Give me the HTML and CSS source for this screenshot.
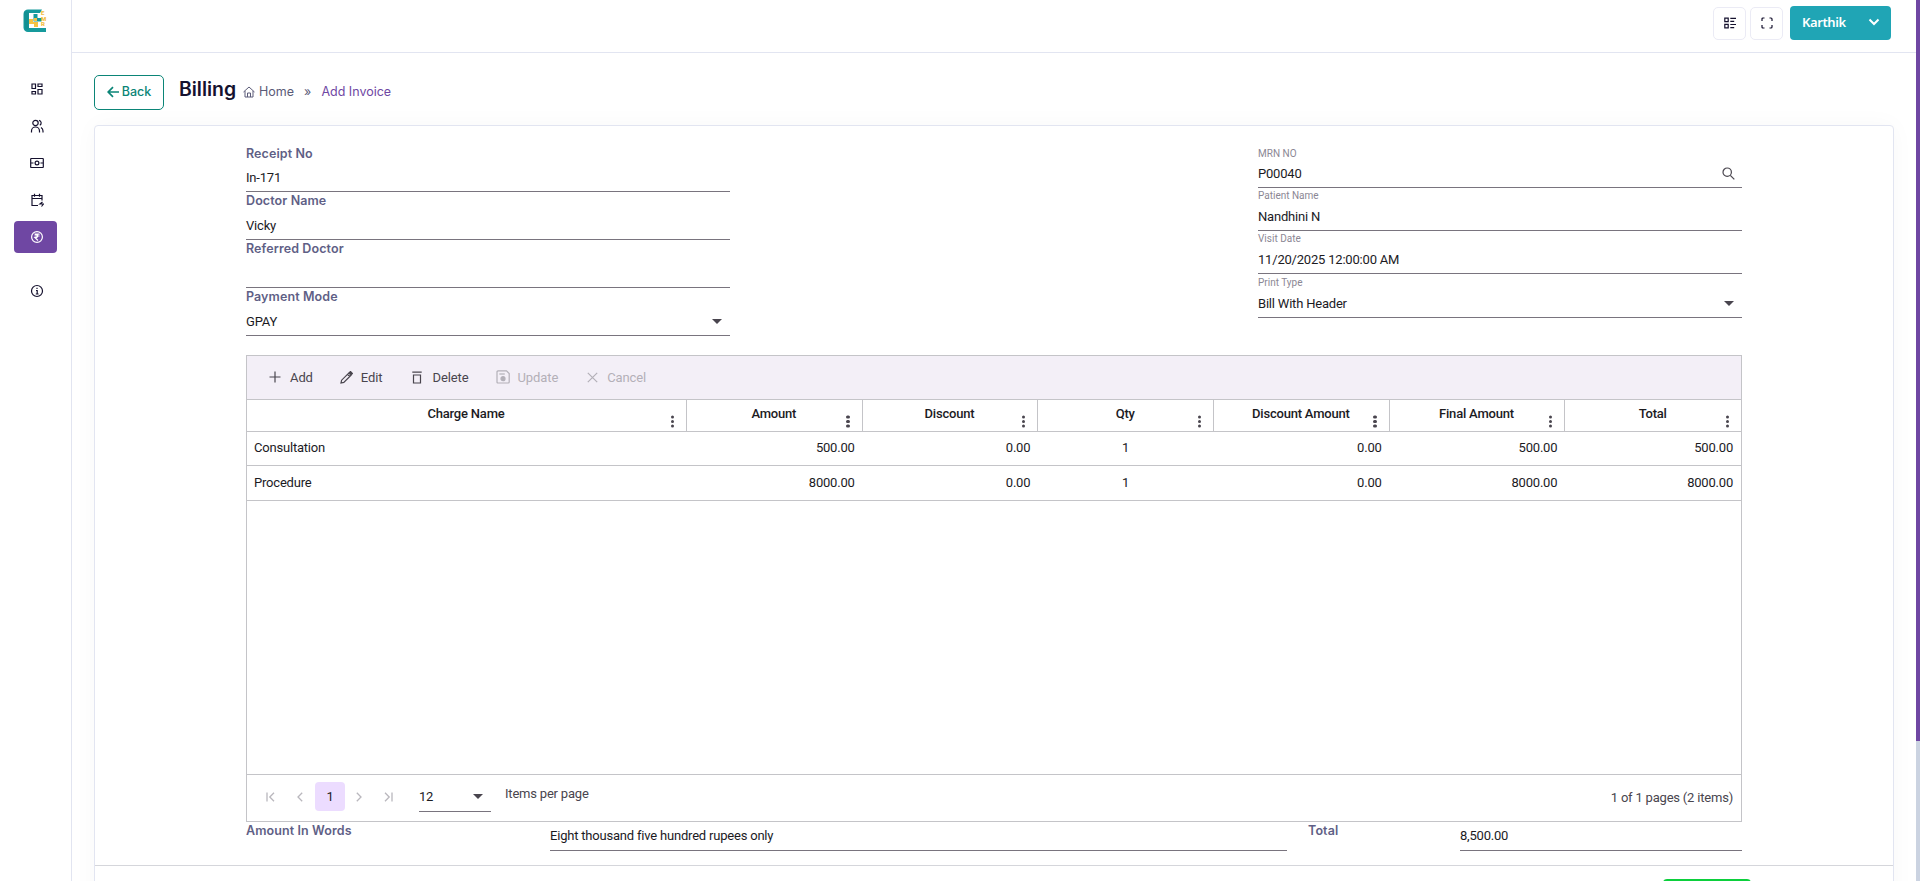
FILE: index.html
```html
<!DOCTYPE html>
<html lang="en">
<head>
  <meta charset="UTF-8">
  <meta name="viewport" content="width=device-width, initial-scale=1.0">
  <title>Billing - Add Invoice</title>
  <link rel="stylesheet" href="styles.css">
</head>
<body>
  <div class="app">
    <aside class="sidebar">
      <div class="logo">
        <svg width="24" height="24" viewBox="0 0 24 24">
          <path d="M5 .5h14l-2 3.5H6v15h17v4H5a4.5 4.5 0 0 1-4.500-4.500V5A4.500 4.500 0 0 1 5 .5z" fill="#169a9c"/>
          <path d="M1 2.500h4.500v18H2z" fill="#0e8588" opacity=".5"/>
          <path d="M10.500 5h4v4h4v3.500h-8z" fill="#169a9c"/>
          <path d="M6 10h4v3h5v5h-4v-3H6zM11 9h3v3h-3z" fill="#f6c244"/>
        </svg>
        <span class="logo-text">E<br>M<br>R</span>
      </div>
      <nav class="menu">
        <a class="menu-item" href="#">
          <svg width="12" height="12" viewBox="0 0 12 12" class="line"><path d="M1 1h3.500v4.500H1zM7 1h4v2.500H7zM1 8.500h3.500V11H1zM7 6.500h4V11H7z"/></svg>
        </a>
        <a class="menu-item" href="#">
          <svg width="14" height="14" viewBox="0 0 14 14" class="line"><circle cx="5.500" cy="4" r="2.700"/><path d="M1.500 13.500v-1.500a4 4 0 0 1 8 0v1.500M9 1.300a2.700 2.700 0 0 1 .8 5M11 8.500a4 4 0 0 1 2 3.500v1.500"/></svg>
        </a>
        <a class="menu-item" href="#">
          <svg width="14" height="12" viewBox="0 0 14 12" class="line"><rect x=".7" y="1.500" width="12.600" height="9" rx=".5"/><circle cx="7" cy="6" r="1.900"/><path d="M1 6h2.500M10.500 6H13"/></svg>
        </a>
        <a class="menu-item" href="#">
          <svg width="14" height="14" viewBox="0 0 14 14" class="line"><path d="M8 12.500H2v-10h10v5M2 5.500h10M4.500.8v3M9.500.8v3M12.500 9L10 11h3.500l-2 2.500"/></svg>
        </a>
        <a class="menu-item active" href="#">
          <svg width="14" height="14" viewBox="0 0 14 14" class="line"><circle cx="7" cy="7" r="5.400"/><path d="M4.500 4.200h5M4.500 6h5M5 4.300c3.500 0 3.500 3.400 0 3.400L8 10.500"/></svg>
        </a>
        <a class="menu-item info" href="#">
          <svg width="14" height="14" viewBox="0 0 14 14" class="line"><circle cx="7" cy="7" r="5.500"/><path d="M6 6.500h1.200V10M5.800 10h2.800M7 3.700v1.300"/></svg>
        </a>
      </nav>
    </aside>

    <div class="content">
      <header class="topbar">
        <button class="icon-btn">
          <svg width="12" height="12" viewBox="0 0 12 12" class="line"><path d="M.8 1.200h3.400v3.400H.8zM.8 7.400h3.400v3.400H.8zM6.300 1.300H12M6.300 4.400h3.900M6.300 7.500H12M6.300 10.600h3.900"/></svg>
        </button>
        <button class="icon-btn">
          <svg width="12" height="12" viewBox="0 0 12 12" class="line"><path d="M1 4V2q0-1 1-1h1.500M8.500 1H10q1 0 1 1v2M11 8v2q0 1-1 1H8.500M3.500 11H2q-1 0-1-1V8"/></svg>
        </button>
        <button class="user-btn">
          <span>Karthik</span>
          <svg width="12" height="8" viewBox="0 0 12 8" fill="none" stroke="#fff" stroke-width="2"><path d="M1.500 1.500L6 6l4.500-4.500"/></svg>
        </button>
      </header>

      <main class="page">
        <div class="page-head">
          <button class="back-btn">
            <svg width="12" height="12" viewBox="0 0 12 12" fill="none" stroke="#0b8577" stroke-width="1.700"><path d="M12 6H1.500M6 1.200L1.200 6 6 10.800"/></svg>
            Back
          </button>
          <h1>Billing</h1>
          <div class="breadcrumb">
            <svg width="12" height="12" viewBox="0 0 12 12" fill="none" stroke="#5b5b78" stroke-width="1"><path d="M.5 6L6 1l5.500 5M2 5v6h8V5M4.500 11V7h3v4"/></svg>
            <span class="home">Home</span>
            <span class="sep">»</span>
            <span class="current">Add Invoice</span>
          </div>
        </div>

        <section class="card">
          <div class="card-body">
            <div class="form">
              <div class="form-left">
                <label class="label">Receipt No</label>
                <div class="input">In-171</div>
                <label class="label">Doctor Name</label>
                <div class="input">Vicky</div>
                <label class="label">Referred Doctor</label>
                <div class="input"></div>
                <label class="label">Payment Mode</label>
                <div class="input">GPAY<i class="caret"></i></div>
              </div>
              <div class="form-right">
                <label class="float-label">MRN NO</label>
                <div class="input">P00040
                  <svg class="search" width="13" height="13" viewBox="0 0 13 13" fill="none" stroke="#49454e" stroke-width="1.200"><circle cx="5.200" cy="5.200" r="4.200"/><path d="M8.300 8.300l4 4"/></svg>
                </div>
                <label class="float-label">Patient Name</label>
                <div class="input">Nandhini N</div>
                <label class="float-label">Visit Date</label>
                <div class="input">11/20/2025 12:00:00 AM</div>
                <label class="float-label last">Print Type</label>
                <div class="input">Bill With Header<i class="caret"></i></div>
              </div>
            </div>

            <div class="grid">
              <div class="toolbar">
                <button class="tool add"><svg width="12" height="12" viewBox="0 0 12 12"><path d="M6 .5v11M.5 6h11"/></svg>Add</button>
                <button class="tool edit"><svg width="13" height="13" viewBox="0 0 13 13"><path d="M1 12l.6-2.800L8.800 2l2.200 2.200-7.200 7.200zM7.500 3.300l2.200 2.200"/><path d="M9.500 1.500l1-1 2 2-1 1z" fill="#49454e"/></svg>Edit</button>
                <button class="tool delete"><svg width="10" height="13" viewBox="0 0 10 13"><path d="M.3 1.200h9.400M1.500 4h7v8h-7z"/></svg>Delete</button>
                <button class="tool update disabled"><svg width="14" height="14" viewBox="0 0 14 14"><path d="M2 .8h8.500l2.700 2.700V12q0 1-1 1H2q-1 0-1-1V2q0-1 1-1z"/><path d="M3.300 4h5.500"/><circle cx="7" cy="8.700" r="2" fill="#b3b0b8"/></svg>Update</button>
                <button class="tool cancel disabled"><svg width="11" height="11" viewBox="0 0 11 11"><path d="M.8.8l9.400 9.400M10.200.8L.8 10.200"/></svg>Cancel</button>
              </div>
              <div class="row head">
                <div>Charge Name<i class="dots"></i></div>
                <div>Amount<i class="dots"></i></div>
                <div>Discount<i class="dots"></i></div>
                <div>Qty<i class="dots"></i></div>
                <div>Discount Amount<i class="dots"></i></div>
                <div>Final Amount<i class="dots"></i></div>
                <div>Total<i class="dots"></i></div>
              </div>
              <div class="row">
                <div class="name">Consultation</div>
                <div>500.00</div>
                <div>0.00</div>
                <div class="qty">1</div>
                <div>0.00</div>
                <div>500.00</div>
                <div>500.00</div>
              </div>
              <div class="row second">
                <div class="name">Procedure</div>
                <div>8000.00</div>
                <div>0.00</div>
                <div class="qty">1</div>
                <div>0.00</div>
                <div>8000.00</div>
                <div>8000.00</div>
              </div>
              <div class="empty"></div>
              <div class="pager">
                <span class="page-btn"><svg width="9" height="10" viewBox="0 0 9 10"><path d="M1 .5v9M8 .8L3.800 5 8 9.200"/></svg></span>
                <span class="page-btn"><svg width="6" height="10" viewBox="0 0 6 10"><path d="M5.200.8L1 5l4.200 4.200"/></svg></span>
                <span class="page-btn selected">1</span>
                <span class="page-btn next"><svg width="6" height="10" viewBox="0 0 6 10"><path d="M.8.8L5 5 .8 9.200"/></svg></span>
                <span class="page-btn last"><svg width="9" height="10" viewBox="0 0 9 10"><path d="M8 .5v9M1 .8L5.200 5 1 9.200"/></svg></span>
                <div class="page-size">12<i class="caret"></i></div>
                <span class="per-page">Items per page</span>
                <span class="page-info">1 of 1 pages (2 items)</span>
              </div>
            </div>

            <div class="summary">
              <label class="label">Amount In Words</label>
              <div class="input">Eight thousand five hundred rupees only</div>
              <label class="label total">Total</label>
              <div class="input">8,500.00</div>
            </div>
          </div>
          <div class="card-footer">
            <button class="save-btn"></button>
          </div>
        </section>
      </main>
    </div>

    <div class="scroll-track"><div class="scroll-thumb"></div></div>
  </div>
</body>
</html>
```
FILE: styles.css
```css
* {
  box-sizing: border-box;
}
body {
  margin: 0;
  font-family: Roboto, 'Liberation Sans', sans-serif;
  font-size: 13px;
  letter-spacing: -0.2px;
  color: #1c1b1f;
  background: #fff;
  overflow: hidden;
}
button {
  font-family: inherit;
  font-size: inherit;
  padding: 0;
  background: none;
  border: none;
  display: flex;
  align-items: center;
}
svg {
  display: block;
  flex-shrink: 0;
}
.app {
  display: flex;
  height: 881px;
  overflow: hidden;
}

/* sidebar */
.sidebar {
  width: 72px;
  border-right: 1px solid #e2e5f1;
}
.logo {
  display: flex;
  position: relative;
  height: 70px;
  padding: 9px 0 0 23px;
}
.logo-text {
  position: absolute;
  left: 41px;
  top: 10px;
  font-size: 6px;
  line-height: 5.5px;
  font-weight: 900;
  color: #f2bd42;
}
.menu {
  display: flex;
  flex-direction: column;
  gap: 5px;
  padding: 3px 14px;
}
.menu-item {
  display: flex;
  align-items: center;
  justify-content: center;
  height: 32px;
  padding-left: 3px;
  border-radius: 4px;
  color: #15112e;
}
.menu-item.active {
  background: #6f47a3;
  color: #fff;
}
.menu-item.info {
  margin-top: 17px;
}
.line {
  fill: none;
  stroke: currentColor;
  stroke-width: 1.2;
}

/* top bar */
.content {
  width: 1844px;
  display: flex;
  flex-direction: column;
}
.topbar {
  display: flex;
  flex-shrink: 0;
  justify-content: flex-end;
  align-items: flex-start;
  height: 53px;
  padding: 6px 25px 0 0;
  border-bottom: 1px solid #e2e5f1;
}
.icon-btn {
  width: 33px;
  height: 33px;
  margin: 1px 4px 0 0;
  padding-bottom: 2px;
  justify-content: center;
  border: 1px solid #ebebf5;
  border-radius: 5px;
  color: #15112e;
}
.user-btn {
  width: 101px;
  height: 34px;
  margin-left: 3px;
  padding: 0 11px 2px 12px;
  justify-content: space-between;
  border-radius: 4px;
  background: #20a5b5;
  color: #fff;
  font-family: 'Noto Sans', sans-serif;
  font-weight: 600;
  letter-spacing: -0.4px;
}

/* page heading */
.page {
  padding: 22px 22px 0;
}
.page-head {
  display: flex;
  height: 50px;
  font-family: Inter, sans-serif;
  font-size: 12.5px;
  letter-spacing: 0;
}
.back-btn {
  width: 70px;
  height: 35px;
  padding-bottom: 2px;
  justify-content: center;
  gap: 3px;
  border: 1px solid #0b8577;
  border-radius: 5px;
  color: #0b8577;
  font-weight: 500;
}
h1 {
  margin: 0 7px 0 15px;
  font-size: 19.4px;
  line-height: 28px;
  font-weight: 600;
  color: #15112e;
}
.breadcrumb {
  display: flex;
  align-items: center;
  height: 33px;
  color: #5b5b78;
}
.home {
  margin-left: 4px;
}
.sep {
  margin: 0 10px;
}
.current {
  color: #6f47a3;
}

/* card */
.card {
  height: 800px;
  border: 1px solid #e2e5f1;
  border-radius: 4px;
  box-shadow: 0 0 24px rgba(0, 0, 0, 0.03);
  background: #fff;
}
.card-body {
  height: 740px;
  padding: 18px 151px 0;
  border-bottom: 1px solid #d5d6db;
}
.form {
  display: flex;
  justify-content: space-between;
  height: 211px;
}
.form-left,
.form-right {
  width: 484px;
  display: flex;
  flex-direction: column;
}
.label {
  height: 20px;
  line-height: 18px;
  font-family: Inter, sans-serif;
  font-size: 12.5px;
  font-weight: 600;
  letter-spacing: 0.1px;
  color: #5f5f86;
}
.form-left .label:first-child {
  line-height: 20px;
}
.input {
  display: flex;
  align-items: center;
  justify-content: space-between;
  height: 28px;
  padding-bottom: 1px;
  border-bottom: 1px solid #79747e;
}
.caret {
  border: 5px solid transparent;
  border-top-color: #49454e;
  border-bottom: 0;
  margin-right: 8px;
}
.search {
  margin-right: 7px;
}
.float-label {
  height: 17px;
  padding-top: 1px;
  line-height: 14px;
  font-size: 10px;
  letter-spacing: 0;
  color: #8b8794;
}
.float-label:first-child {
  height: 18px;
  padding-top: 3px;
}
.form-right .input {
  height: 26px;
  padding-bottom: 3px;
}
.float-label.last {
  height: 18px;
  padding-top: 2px;
}

/* grid */
.grid {
  display: flex;
  flex-direction: column;
  height: 467px;
  border: 1px solid #c4c4c8;
}
.toolbar {
  display: flex;
  height: 44px;
  padding-left: 22px;
  background: #f3eff7;
  border-bottom: 1px solid #c4c4c8;
  letter-spacing: -0.1px;
}
.tool {
  gap: 8px;
  padding-bottom: 1px;
  letter-spacing: inherit;
  color: #49454e;
}
.tool svg {
  fill: none;
  stroke: currentColor;
  stroke-width: 1.2;
}
.tool.add {
  gap: 9px;
}
.tool.edit {
  margin-left: 27px;
}
.tool.delete {
  margin-left: 30px;
  gap: 10px;
}
.tool.update {
  margin-left: 27px;
}
.tool.cancel {
  margin-left: 29px;
  gap: 9px;
}
.tool.disabled {
  color: #b3b0b8;
}
.row {
  display: grid;
  grid-template-columns: 440px repeat(6, 1fr);
  height: 34px;
  line-height: 32px;
  border-bottom: 1px solid #c4c4c8;
  text-align: right;
}
.row > div {
  padding: 0 8px 0 7px;
}
.row.second {
  height: 35px;
  line-height: 34px;
}
.row.head {
  height: 32px;
  line-height: 28px;
  font-weight: 500;
  text-align: center;
}
.row.head > div {
  position: relative;
  border-right: 1px solid #c4c4c8;
}
.row.head > div:last-child {
  border-right: 0;
}
.dots {
  position: absolute;
  right: 12px;
  bottom: 8px;
  width: 3.5px;
  height: 3.5px;
  border-radius: 50%;
  background: #49454e;
  box-shadow: 0 -4.5px #49454e, 0 4.5px #49454e;
}
.row .name {
  text-align: left;
}
.row .qty {
  text-align: center;
}
.empty {
  flex: 1;
}
.pager {
  display: flex;
  align-items: flex-start;
  height: 47px;
  padding: 7px 8px 0;
  border-top: 1px solid #c4c4c8;
  color: #49454e;
}
.page-btn {
  width: 30px;
  height: 29px;
  display: flex;
  align-items: center;
  justify-content: center;
  border-radius: 4px;
}
.page-btn svg {
  fill: none;
  stroke: #b9b7bd;
  stroke-width: 1.3;
}
.page-btn.selected {
  background: #ecdcff;
  color: #1c1b1f;
}
.page-btn.next {
  padding-right: 2px;
}
.page-btn.last {
  padding-right: 3px;
}
.page-size {
  display: flex;
  align-items: center;
  justify-content: space-between;
  width: 72px;
  height: 30px;
  margin: 0 14px;
  border-bottom: 1px solid #79747e;
  color: #1c1b1f;
}
.per-page {
  line-height: 24px;
}
.page-info {
  margin-left: auto;
  line-height: 31px;
}

/* totals */
.summary {
  display: grid;
  grid-template-columns: 304px 737px 173px 282px;
  height: 30px;
}
.summary .label {
  line-height: 18px;
}
.summary .total {
  padding-left: 21px;
}
.summary .input {
  height: 29px;
}
.card-footer {
  display: flex;
  justify-content: flex-end;
  padding: 13px 142px 0 0;
}
.save-btn {
  width: 88px;
  height: 36px;
  border-radius: 4px;
  background: #0ccf3c;
}

/* scrollbar */
.scroll-track {
  width: 4px;
  background: #cbd3e1;
}
.scroll-thumb {
  height: 741px;
  background: #6f47a3;
}
```
